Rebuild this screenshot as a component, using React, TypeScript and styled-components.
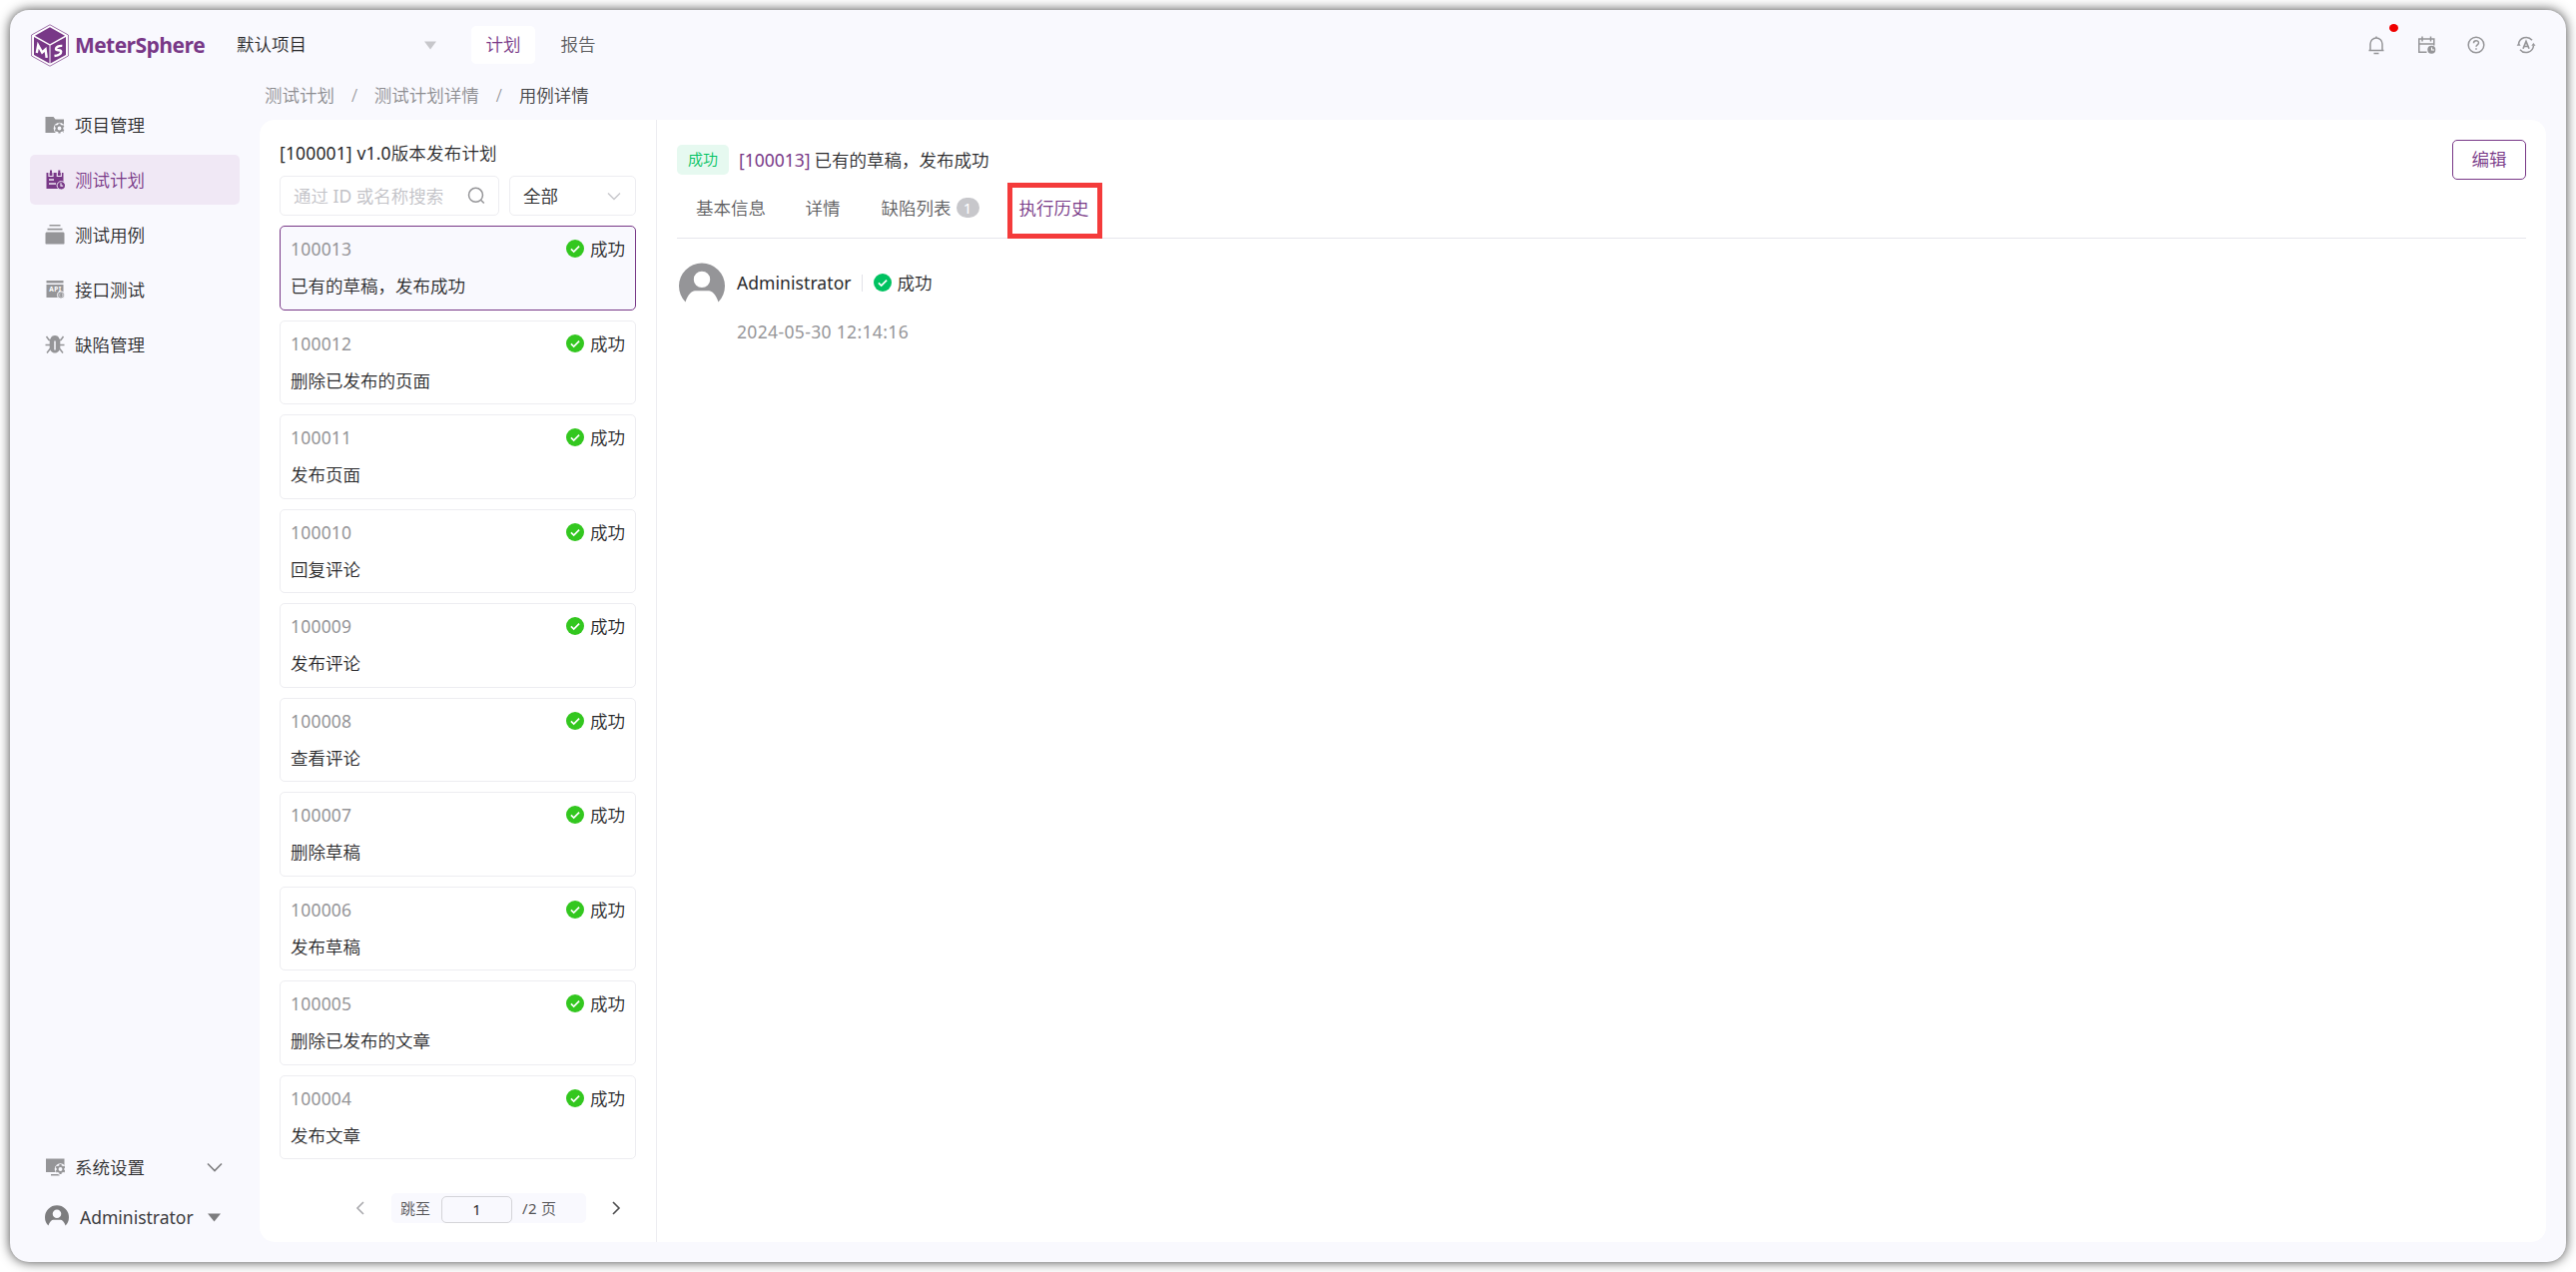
import React from "react";
import styled, { createGlobalStyle } from "styled-components";

const Global = createGlobalStyle`
  * { box-sizing: border-box; }
  body {
    margin: 0;
    background: #fff;
    color: #29292b;
    font-family: "Noto Sans", "Noto Sans CJK SC", sans-serif;
    font-size: 17.5px;
    font-weight: 350;
    line-height: 24px;
  }
  svg { display: block; flex: none; }
`;

const purple = "#783887";
const line = "#ededf1";

const Page = styled.div`
  height: 1274px;
  padding: 10px;
`;
const Shell = styled.div`
  display: flex;
  flex-direction: column;
  height: 1254px;
  background: #f9f9fe;
  border-radius: 19px;
  box-shadow: 0 0 12px rgba(0, 0, 0, 0.72);
`;
const Header = styled.header`
  display: flex;
  align-items: center;
  height: 70px;
  padding: 0 20px 0 21px;
`;
const Brand = styled.div`
  display: flex;
  align-items: center;
  gap: 6px;
  width: 206px;
  color: ${purple};
  font: 700 21px/30px "Open Sans", "Noto Sans", sans-serif;
  letter-spacing: -0.55px;
`;
const ProjectSelect = styled.div`
  display: flex;
  align-items: center;
  justify-content: space-between;
  width: 200px;
  margin-right: 35px;
  span { margin-top: -2px; }
`;
const NavTab = styled.div<{ $active?: boolean }>`
  display: flex;
  align-items: center;
  justify-content: center;
  width: 64px;
  height: 38px;
  margin-right: 11px;
  padding-bottom: 2px;
  border-radius: 5px;
  background: ${(p) => (p.$active ? "#fff" : "transparent")};
  color: ${(p) => (p.$active ? purple : "#5c5c5e")};
`;
const Tools = styled.div`
  display: flex;
  align-items: center;
  gap: 30px;
  margin-left: auto;
  padding-right: 10px;
`;
const Tool = styled.div`
  position: relative;
  width: 20px;
  height: 20px;
`;
const Dot = styled.span`
  position: absolute;
  top: -11px;
  left: 23px;
  width: 9px;
  height: 8px;
  border-radius: 50%;
  background: #f00000;
`;
const Body = styled.div`
  display: flex;
  flex: 1;
  min-height: 0;
`;
const Sidebar = styled.nav`
  display: flex;
  flex-direction: column;
  width: 250px;
  padding: 20px 20px 22px;
`;
const SideItem = styled.div<{ $active?: boolean }>`
  display: flex;
  align-items: center;
  gap: 10px;
  height: 50px;
  margin-bottom: 5px;
  padding: 0 16px 0 15px;
  border-radius: 5px;
  background: ${(p) => (p.$active ? "#f0e8f5" : "transparent")};
  color: ${(p) => (p.$active ? purple : "#29292b")};
  svg { color: ${(p) => (p.$active ? purple : "#959598")}; }
  svg:last-child:not(:first-child) { margin-left: auto; }
`;
const SideBottom = styled.div`
  margin-top: auto;
`;
const UserRow = styled(SideItem)`
  height: 46px;
  margin-top: -3px;
  margin-bottom: 0;
  padding-right: 19px;
  gap: 11px;
  font-weight: 400;
  color: #3c3c3e;
  svg { color: #7d7d7f; }
`;
const Main = styled.main`
  display: flex;
  flex: 1;
  flex-direction: column;
  padding: 0 20px 20px 0;
`;
const Crumbs = styled.div`
  display: flex;
  gap: 16.9px;
  height: 40px;
  padding: 3px 0 0 5px;
  color: #8c8c90;
  b { font-weight: inherit; color: #434345; }
`;
const Card = styled.section`
  display: flex;
  flex: 1;
  background: #fff;
  border-radius: 15px;
`;
const ListPane = styled.div`
  display: flex;
  flex-direction: column;
  width: 398px;
  padding: 20px 20px 0;
  border-right: 1px solid ${line};
`;
const PlanTitle = styled.div`
  height: 36px;
  padding-top: 1px;
  letter-spacing: 0.18px;
`;
const Filters = styled.div`
  display: flex;
  gap: 10px;
  margin-bottom: 10px;
`;
const Field = styled.div<{ $w: number; $hint?: boolean }>`
  display: flex;
  align-items: center;
  justify-content: space-between;
  width: ${(p) => p.$w}px;
  height: 40px;
  padding: 0 13px;
  border: 1px solid ${line};
  border-radius: 5px;
  white-space: nowrap;
  color: ${(p) => (p.$hint ? "#c2c2c7" : "#29292b")};
  span { margin-top: -1px; }
`;
const CaseCard = styled.div<{ $active?: boolean }>`
  height: 84.5px;
  margin-bottom: 10px;
  padding: 10px 10px 0;
  border: 1px solid ${(p) => (p.$active ? purple : line)};
  border-radius: 5px;
  background: ${(p) => (p.$active ? "#f9f9fe" : "#fff")};
`;
const CaseTop = styled.div`
  display: flex;
  align-items: center;
  justify-content: space-between;
  height: 24px;
  margin-bottom: 13px;
  color: #959598;
`;
const Latin = styled.span<{ $spacing?: number }>`
  font-weight: 400;
  letter-spacing: ${(p) => p.$spacing ?? 0}px;
`;
const Status = styled.span`
  display: flex;
  align-items: center;
  gap: 6px;
  color: #29292b;
`;
const Pager = styled.div`
  display: flex;
  align-items: center;
  height: 30px;
  margin-top: 23.5px;
  padding-left: 75px;
`;
const Jump = styled.div`
  display: flex;
  align-items: center;
  width: 195px;
  height: 30px;
  margin: 0 25px 0 26px;
  padding-left: 9px;
  border-radius: 5px;
  background: #f9f9fe;
  font-size: 15px;
  color: #545456;
  white-space: pre;
`;
const PageBox = styled.span`
  width: 71px;
  height: 27px;
  margin: 3px 10px 0 11px;
  border: 1px solid #d4d4d8;
  border-radius: 5px;
  text-align: center;
  color: #29292b;
  font-weight: 400;
  line-height: 24px;
`;
const Detail = styled.div`
  flex: 1;
  padding: 20px 20px 0;
`;
const DetailHead = styled.div`
  display: flex;
  align-items: center;
  height: 40px;
`;
const Tag = styled.span`
  width: 52px;
  height: 30px;
  margin-right: 10px;
  border-radius: 5px;
  background: #e6f9f0;
  color: #00c261;
  font-size: 15px;
  line-height: 28px;
  text-align: center;
`;
const CaseId = styled(Latin)`
  margin-right: 4px;
  color: ${purple};
`;
const EditButton = styled.button`
  width: 74px;
  height: 40px;
  margin-left: auto;
  padding: 0 0 2px;
  border: 1px solid ${purple};
  border-radius: 5px;
  background: #fff;
  color: ${purple};
  font: inherit;
`;
const Tabs = styled.div`
  display: flex;
  align-items: flex-start;
  height: 59px;
  border-bottom: 1px solid #e6e6ec;
  padding-left: 19px;
  color: #5c5c5e;
`;
const Tab = styled.div<{ $gap: number }>`
  display: flex;
  align-items: center;
  gap: 5px;
  margin-right: ${(p) => p.$gap}px;
  padding-top: 16px;
`;
const Count = styled.span`
  width: 23px;
  height: 20px;
  border-radius: 10px;
  background: #c7c7cb;
  color: #fff;
  font-size: 15px;
  font-weight: 400;
  line-height: 20px;
  text-align: center;
`;
const ActiveTab = styled.div`
  width: 95px;
  height: 56px;
  margin-top: 3px;
  padding: 8px 0 0 7px;
  border: 5px solid #f43b3b;
  color: ${purple};
  white-space: nowrap;
`;
const HistoryItem = styled.div`
  display: flex;
  gap: 12px;
  padding: 24px 0 0 2px;
  > svg { color: #959598; }
`;
const Who = styled.div`
  display: flex;
  align-items: center;
  height: 24px;
  margin: 8px 0 25px;
`;
const Bar = styled.i`
  width: 1px;
  height: 17px;
  margin: 0 11px 0 10px;
  background: #e2e2e8;
`;
const Time = styled.div`
  color: #959598;
  font-weight: 400;
  letter-spacing: 0.35px;
`;

const Logo = () => (
  <svg width="38" height="43" viewBox="0 0 38 43">
    <path d="M19 .8 37.400 11v21L19 42.200.6 32V11z" fill="#fff" stroke={purple} strokeWidth="0.7" />
    <path d="M19 3.300 34 11.700 19 20.300 4 11.700z" fill={purple} />
    <path d="M3 13 18.500 21.600v17.900L3 31z" fill={purple} />
    <path d="M35 13 19.500 21.600v17.900L35 31z" fill={purple} />
    <path d="m5.800 29 1.400-7.800 4 7.300 3.400-3 1.100 8.300" fill="none" stroke="#fff" strokeWidth="2.400" />
    <path d="M31.300 21.900c-3.300-.3-6.300 1-6.300 3.100s5.200.3 5.200 2.700-3 3.800-6.700 4.300" fill="none" stroke="#fff" strokeWidth="2.400" />
  </svg>
);
const Check = ({ color }: { color: string }) => (
  <svg width="18" height="18" viewBox="0 0 18 18">
    <circle cx="9" cy="9" r="9" fill={color} />
    <path d="m4.900 9.300 2.800 2.700L13.100 6.700" fill="none" stroke="#fff" strokeWidth="1.700" />
  </svg>
);
const Caret = ({ color, w = 12 }: { color: string; w?: number }) => (
  <svg width={w} height="9" viewBox="0 0 12 9" preserveAspectRatio="none"><path d="M0 .5h12L6 8.500z" fill={color} /></svg>
);
const Chevron = ({ d, w, h, color, s = 1.4 }: { d: string; w: number; h: number; color: string; s?: number }) => (
  <svg width={w} height={h} viewBox={`0 0 ${w} ${h}`}><path d={d} fill="none" stroke={color} strokeWidth={s} /></svg>
);
const Avatar = ({ size }: { size: number }) => (
  <svg width={size} height={size} viewBox="0 0 46 46" fill="currentColor">
    <path fillRule="evenodd" d="M6.500 39.500A23 23 0 1 1 39.500 39.500C37 32 33 28.300 30 28.300H16c-3 0-7 3.700-9.500 11.200zM23 8.700a8.200 8.200 0 1 0 0 16.400 8.200 8.200 0 0 0 0-16.400z" />
  </svg>
);
const Gear = ({ x, y, bg }: { x: number; y: number; bg: string }) => (
  <g transform={`translate(${x} ${y})`}>
    <circle r="5.800" fill={bg} />
    <circle r="2.900" fill="none" stroke="currentColor" strokeWidth="1.900" />
    {[0, 60, 120, 180, 240, 300].map((a) => (
      <path key={a} d="M0-3v-2" stroke="currentColor" strokeWidth="2.200" transform={`rotate(${a})`} />
    ))}
  </g>
);
const FolderIcon = () => (
  <svg width="20" height="20" viewBox="0 0 20 20">
    <path d="M.5 2h8l2 2.500h8.500V18H.5z" fill="currentColor" />
    <Gear x={14.5} y={13.5} bg="#f9f9fe" />
  </svg>
);
const PlanIcon = () => (
  <svg width="20" height="20" viewBox="0 0 20 20">
    <path d="M1.500 3h17v16h-17z" fill="currentColor" />
    <path d="M4 0v6.500h4V0M12.300 0v6.500h4V0" fill="none" stroke="#f0e8f5" strokeWidth="1.200" />
    <path d="M5 .5h2v5H5zM13.300.5h2v5h-2z" fill="currentColor" />
    <path d="M4 10h5M4 14h7" stroke="#f0e8f5" strokeWidth="1.600" />
    <circle cx="16.300" cy="15.800" r="4.200" fill="currentColor" stroke="#f0e8f5" />
    <path d="M16 13.300V16.200h2.200" fill="none" stroke="#f0e8f5" strokeWidth="1.200" />
  </svg>
);
const StackIcon = () => (
  <svg width="20" height="20" viewBox="0 0 20 20" fill="currentColor">
    <path d="M4.500 0h11v1.400h-11zM2.500 3.800h15v1.700h-15zM1.500 7.500h17l1 1V19l-.5.500H1L.5 19V8.500z" />
  </svg>
);
const ApiIcon = () => (
  <svg width="20" height="20" viewBox="0 0 20 20" fill="currentColor">
    <path d="M1.500 1h17v2.500h-17zM1.500 5h17v13h-17z" />
    <text x="4.300" y="12" fontSize="6.500" fontWeight="700" fill="#fff" textLength="12">API</text>
    <circle cx="16" cy="15.500" r="3.600" stroke="#f9f9fe" strokeWidth="1" />
    <path d="m15.500 13.800-1.500 1.700 1.500 1.700M17 13.800l1.300 1.700-1.300 1.700" fill="none" stroke="#f9f9fe" strokeWidth=".7" />
  </svg>
);
const BugIcon = () => (
  <svg width="20" height="20" viewBox="0 0 20 20">
    <path d="M5.500 4.500C6 2 8 1 10 1s4 1 4.500 3.500L15.300 6v6.500c0 3.500-2.300 6-5.300 6s-5.300-2.500-5.300-6V6z" fill="currentColor" />
    <path d="M1.500 2 4 5.500h2M18.500 2 16 5.500h-2M.5 10.500H5M15 10.500h4.500M5.500 14 2 18.500M14.500 14l3.500 4.500" fill="none" stroke="currentColor" strokeWidth="1.500" />
    <path d="M10 6.500v9" stroke="#f9f9fe" strokeWidth="1.500" />
  </svg>
);
const MonitorIcon = () => (
  <svg width="20" height="20" viewBox="0 0 20 20">
    <path d="M1 1.500h18.500V15H1zM6 17h8.500v1.500H6z" fill="currentColor" />
    <Gear x={15.5} y={12} bg="#f9f9fe" />
  </svg>
);
const BellIcon = () => (
  <svg width="20" height="20" viewBox="0 0 20 20" fill="none" stroke="#959598" strokeWidth="1.500">
    <path d="M10 1.500V3.500M4 15.500V9a6 6 0 0 1 12 0v6.500M2.500 15.500h15M7.500 18.500h5" />
  </svg>
);
const CalendarIcon = () => (
  <svg width="20" height="20" viewBox="0 0 20 20" fill="none" stroke="#959598" strokeWidth="1.500">
    <path d="M10.500 17.300H2.800V4h15v6.500M2.800 9h15M6 1.500v5M14.500 1.500v5" />
    <circle cx="15.300" cy="14.800" r="4" fill="#959598" stroke="none" />
    <path d="M15.500 12.500V15H18" stroke="#fff" strokeWidth="1.100" />
  </svg>
);
const HelpIcon = () => (
  <svg width="20" height="20" viewBox="0 0 20 20" fill="none" stroke="#959598" strokeWidth="1.500">
    <circle cx="10" cy="10" r="7.800" />
    <path d="M7.500 8.200c0-3.300 5-3.200 5-.3 0 1.900-2.500 1.900-2.500 3.900M10 13.200v1.600" />
  </svg>
);
const LangIcon = () => (
  <svg width="20" height="20" viewBox="0 0 20 20" fill="none" stroke="#959598" strokeWidth="1.500">
    <path d="M2.500 9.500A7.600 7.600 0 0 1 16 5.300M17.500 10.500A7.600 7.600 0 0 1 4 14.700" />
    <path d="M.6 10.800 2.600 8l2.100 2.800zM15.300 10.800 17.400 8l2.100 2.800z" fill="#959598" stroke="none" />
    <path d="M7 13.800 10 6.500l3 7.300M8 11.500h4" strokeWidth="1.700" />
  </svg>
);
const SearchIcon = () => (
  <svg width="18" height="18" viewBox="0 0 18 18" fill="none" stroke="#959598" strokeWidth="1.500">
    <circle cx="8.500" cy="8.300" r="7" /><path d="m13.500 13.300 3.300 3.200" />
  </svg>
);

const side = [
  { label: "项目管理", icon: <FolderIcon /> },
  { label: "测试计划", icon: <PlanIcon />, active: true },
  { label: "测试用例", icon: <StackIcon /> },
  { label: "接口测试", icon: <ApiIcon /> },
  { label: "缺陷管理", icon: <BugIcon /> },
];
const cases: [string, string][] = [
  ["100013", "已有的草稿，发布成功"],
  ["100012", "删除已发布的页面"],
  ["100011", "发布页面"],
  ["100010", "回复评论"],
  ["100009", "发布评论"],
  ["100008", "查看评论"],
  ["100007", "删除草稿"],
  ["100006", "发布草稿"],
  ["100005", "删除已发布的文章"],
  ["100004", "发布文章"],
];

export default function App() {
  return (
    <Page>
      <Global />
      <Shell>
        <Header>
          <Brand><Logo />MeterSphere</Brand>
          <ProjectSelect><span>默认项目</span><Caret color="#c7c7cb" /></ProjectSelect>
          <NavTab $active>计划</NavTab>
          <NavTab>报告</NavTab>
          <Tools>
            <Tool><BellIcon /><Dot /></Tool>
            <Tool><CalendarIcon /></Tool>
            <Tool><HelpIcon /></Tool>
            <Tool><LangIcon /></Tool>
          </Tools>
        </Header>
        <Body>
          <Sidebar>
            {side.map((s) => (
              <SideItem key={s.label} $active={s.active}>{s.icon}<span>{s.label}</span></SideItem>
            ))}
            <SideBottom>
              <SideItem><MonitorIcon /><span>系统设置</span><Chevron w={18} h={10} d="M2 1.500 9 8.500l7-7" color="#7d7d7f" s={1.6} /></SideItem>
              <UserRow><Avatar size={24} /><span>Administrator</span><Caret color="#7d7d7f" w={13} /></UserRow>
            </SideBottom>
          </Sidebar>
          <Main>
            <Crumbs>
              <span>测试计划</span><span>/</span><span>测试计划详情</span><span>/</span><b>用例详情</b>
            </Crumbs>
            <Card>
              <ListPane>
                <PlanTitle><Latin $spacing={0.15}>[100001] v1.0</Latin>版本发布计划</PlanTitle>
                <Filters>
                  <Field $w={220} $hint><span>通过 <Latin>ID</Latin> 或名称搜索</span><SearchIcon /></Field>
                  <Field $w={127}><span>全部</span><Chevron w={16} h={9} d="M2 1.500 8 7.500l6-6" color="#c7c7cb" /></Field>
                </Filters>
                {cases.map(([id, name], i) => (
                  <CaseCard key={id} $active={i === 0}>
                    <CaseTop><Latin $spacing={0.2}>{id}</Latin><Status><Check color="#33c71f" />成功</Status></CaseTop>
                    {name}
                  </CaseCard>
                ))}
                <Pager>
                  <Chevron w={11} h={14} d="M9 1 3 7l6 6" color="#a9a9ad" s={1.6} />
                  <Jump>跳至<PageBox>1</PageBox><Latin $spacing={0.3}>/2 </Latin>页</Jump>
                  <Chevron w={11} h={14} d="m2 1 6 6-6 6" color="#4b4b4d" s={1.6} />
                </Pager>
              </ListPane>
              <Detail>
                <DetailHead>
                  <Tag>成功</Tag>
                  <CaseId>[100013]</CaseId>已有的草稿，发布成功
                  <EditButton>编辑</EditButton>
                </DetailHead>
                <Tabs>
                  <Tab $gap={39.5}>基本信息</Tab>
                  <Tab $gap={41}>详情</Tab>
                  <Tab $gap={28}>缺陷列表<Count>1</Count></Tab>
                  <ActiveTab>执行历史</ActiveTab>
                </Tabs>
                <HistoryItem>
                  <Avatar size={46} />
                  <div>
                    <Who><Latin $spacing={0.07}>Administrator</Latin><Bar /><Status><Check color="#00c261" />成功</Status></Who>
                    <Time>2024-05-30 12:14:16</Time>
                  </div>
                </HistoryItem>
              </Detail>
            </Card>
          </Main>
        </Body>
      </Shell>
    </Page>
  );
}
